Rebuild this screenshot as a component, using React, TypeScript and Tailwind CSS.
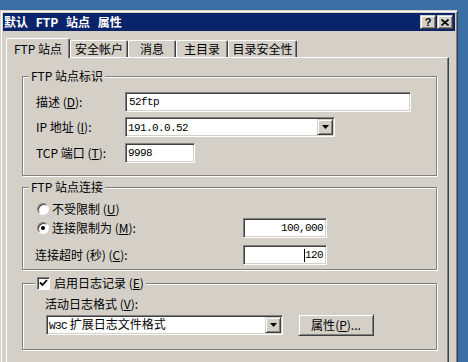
import React from 'react';

const sunken =
  'border border-t-[#808080] border-l-[#808080] border-b-white border-r-white shadow-[inset_1px_1px_0_#404040,inset_-1px_-1px_0_#d4d0c8] bg-white';
const raised =
  'border border-t-[#d4d0c8] border-l-[#d4d0c8] border-b-[#404040] border-r-[#404040] shadow-[inset_1px_1px_0_#fff,inset_-1px_-1px_0_#808080] bg-[#d4d0c8]';
const mono = "font-['Liberation_Mono',monospace] text-[11px] tracking-[-0.6px]";

const Key = ({ c }: { c: string }) => (
  <span>
    (<span className="underline underline-offset-1">{c}</span>)
  </span>
);

const Arrow = () => (
  <div className={`${raised} w-[16px] h-[16px] flex items-center justify-center`}>
    <svg width="7" height="4" viewBox="0 0 7 4">
      <path d="M0 0h7L3.5 4z" fill="#000" />
    </svg>
  </div>
);

const Combo = ({ w, children }: { w: string; children: React.ReactNode }) => (
  <div className={`${sunken} ${w} h-[20px] flex items-center pl-[2px] pr-[1px]`}>
    <div className="flex-1 leading-[14px]">{children}</div>
    <Arrow />
  </div>
);

const Group = ({
  legend,
  legendPos,
  className,
  children,
}: {
  legend: React.ReactNode;
  legendPos: string;
  className?: string;
  children: React.ReactNode;
}) => (
  <div className={`relative w-[415px] border border-[#808080] shadow-[inset_1px_1px_0_#fff,1px_1px_0_#fff] ${className ?? ''}`}>
    <div className={`absolute -top-[8px] ${legendPos} bg-[#d4d0c8] px-[2px] h-[14px] leading-[14px] flex items-center`}>
      {legend}
    </div>
    {children}
  </div>
);

const Radio = ({ checked }: { checked?: boolean }) => (
  <div className="w-[12px] h-[12px] rounded-full border border-t-[#808080] border-l-[#808080] border-b-white border-r-white bg-white shadow-[inset_1px_1px_0_#404040] flex items-center justify-center">
    {checked && <div className="w-[4px] h-[4px] rounded-full bg-black" />}
  </div>
);

export default function App() {
  return (
    <div className="w-[468px] h-[362px] overflow-hidden bg-[#3a6ea5] pt-[10px] font-['Noto_Sans_CJK_SC',sans-serif] text-[12px] text-black">
      <div className="w-[458px] h-[400px] bg-[#d4d0c8] border border-[#d4d0c8] border-r-[#404040] shadow-[inset_1px_1px_0_#fff,inset_-1px_0_0_#808080] p-[2px]">
        {/* title bar */}
        <div className="h-[18px] bg-[#0a246a] flex items-center justify-between pl-[1px] pr-[2px]">
          <span className="text-white font-bold leading-[18px] [word-spacing:5px]">默认 FTP 站点 属性</span>
          <div className="flex gap-[1px]">
            <div className={`${raised} w-[16px] h-[14px] flex items-center justify-center text-[11px] font-bold leading-none font-['Liberation_Sans',sans-serif]`}>
              ?
            </div>
            <div className={`${raised} w-[16px] h-[14px] flex items-center justify-center`}>
              <svg width="8" height="7" viewBox="0 0 8 7">
                <path d="M0.5 0.5l7 6M7.5 0.5l-7 6" stroke="#000" strokeWidth="1.6" />
              </svg>
            </div>
          </div>
        </div>

        {/* tabs */}
        <div className="flex items-end mt-[7px] pl-[3px]">
          <div className="relative z-10 -mb-px w-[64px] h-[20px] bg-[#d4d0c8] border-t border-l border-r border-t-white border-l-white border-r-[#404040] rounded-t-[2px] shadow-[inset_-1px_0_0_#808080] flex items-center justify-center leading-[14px]">
            FTP 站点
          </div>
          {[
            ['安全帐户', 'w-[58px]'],
            ['消息', 'w-[48px]'],
            ['主目录', 'w-[52px]'],
            ['目录安全性', 'w-[69px]'],
          ].map(([t, w]) => (
            <div
              key={t}
              className={`${w} h-[17px] border-t border-l border-r border-t-white border-l-white border-r-[#404040] rounded-t-[2px] shadow-[inset_-1px_0_0_#808080] flex items-center justify-center leading-[14px]`}
            >
              {t}
            </div>
          ))}
        </div>

        {/* panel */}
        <div className="ml-[3px] mr-[6px] h-[320px] border-t border-l border-r border-t-white border-l-white border-r-[#404040] shadow-[inset_-1px_0_0_#808080] pt-[18px] pl-[15px]">
          <Group legend={<span>FTP 站点标识</span>} legendPos="left-[6px]">
            <div className="pt-[15px] pb-[12px] pl-[13px] flex flex-col">
              <div className="flex items-center h-[20px]">
                <span className="w-[89px]">
                  描述 <Key c="D" />:
                </span>
                <div className={`${sunken} w-[286px] h-[20px] flex items-center pl-[3px] ${mono}`}>52ftp</div>
              </div>
              <div className="flex items-center h-[20px] mt-[5px]">
                <span className="w-[89px]">
                  IP 地址 <Key c="I" />:
                </span>
                <Combo w="w-[210px]">
                  <span className={mono}>191.0.0.52</span>
                </Combo>
              </div>
              <div className="flex items-center h-[20px] mt-[6px]">
                <span className="w-[89px]">
                  TCP 端口 <Key c="T" />:
                </span>
                <div className={`${sunken} w-[70px] h-[20px] flex items-center pl-[2px] ${mono}`}>9998</div>
              </div>
            </div>
          </Group>

          <Group legend={<span>FTP 站点连接</span>} legendPos="left-[6px]" className="mt-[11px]">
            <div className="pt-[14px] pb-[4px] pl-[12px] flex flex-col">
              <div className="flex items-center h-[14px] ml-[2px]">
                <Radio />
                <span className="ml-[3px] leading-[14px]">
                  不受限制 <Key c="U" />
                </span>
              </div>
              <div className="flex items-center h-[20px] mt-[2px] ml-[2px]">
                <div className="w-[206px] flex items-center">
                  <Radio checked />
                  <span className="ml-[3px] leading-[14px]">
                    连接限制为 <Key c="M" />:
                  </span>
                </div>
                <div className={`${sunken} w-[84px] h-[20px] flex items-center justify-end pr-[3px] ${mono}`}>100,000</div>
              </div>
              <div className="flex items-center h-[20px] mt-[7px]">
                <span className="w-[208px] leading-[14px]">
                  连接超时 (秒) <Key c="C" />:
                </span>
                <div className={`${sunken} w-[84px] h-[20px] flex items-center justify-end pr-[3px] ${mono}`}>
                  <span className="w-px h-[13px] bg-black" />
                  120
                </div>
              </div>
            </div>
          </Group>

          <Group
            legend={
              <div className="flex items-center">
                <div className="w-[13px] h-[13px] border border-t-[#808080] border-l-[#808080] border-b-white border-r-white bg-white shadow-[inset_1px_1px_0_#404040] flex items-center justify-center">
                  <svg width="9" height="8" viewBox="0 0 9 8">
                    <path d="M1 3.5l2.5 2.5L8 1" stroke="#000" strokeWidth="1.8" fill="none" />
                  </svg>
                </div>
                <span className="ml-[4px]">
                  启用日志记录 <Key c="E" />
                </span>
              </div>
            }
            legendPos="left-[12px]"
            className="mt-[13px]"
          >
            <div className="pt-[13px] pb-[13px] pl-[22px] flex flex-col">
              <div className="h-[14px] leading-[14px]">
                活动日志格式 <Key c="V" />:
              </div>
              <div className="flex items-center h-[22px] mt-[3px]">
                <div className="ml-[1px]">
                  <Combo w="w-[237px]">
                    <span>
                      <span className={mono}>W3C</span> 扩展日志文件格式
                    </span>
                  </Combo>
                </div>
                <div className={`${raised} ml-[15px] w-[76px] h-[22px] flex items-center justify-center leading-[14px]`}>
                  属性 <Key c="P" />...
                </div>
              </div>
            </div>
          </Group>
        </div>
      </div>
    </div>
  );
}
